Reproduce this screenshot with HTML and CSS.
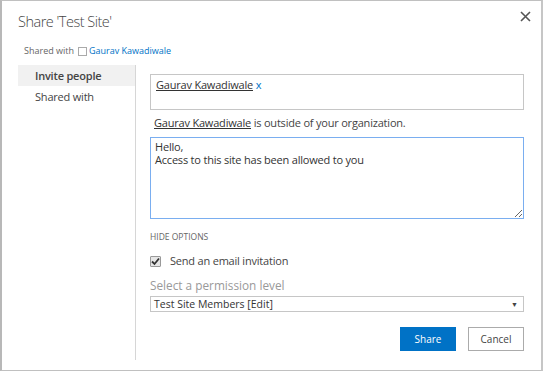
FILE: index.html
```html
<!DOCTYPE html>
<html lang="en">
<head>
    <meta charset="UTF-8">
    <title>Share 'Test Site'</title>
    <link rel="stylesheet" href="styles.css">
</head>
<body>
    <div class="dialog">
        <div class="dialog-header">
            <div class="dialog-title">Share 'Test Site'</div>
            <div class="close-button">
                <svg width="11" height="11" viewBox="0 0 11 11"><path d="M1 1 L10 10 M10 1 L1 10" stroke="#555" stroke-width="1.6"/></svg>
            </div>
        </div>
        <div class="shared-line">
            Shared with <span class="user-box"></span><a class="link">Gaurav Kawadiwale</a>
        </div>
        <div class="dialog-body">
            <div class="side-nav">
                <div class="nav-item selected">Invite people</div>
                <div class="nav-item">Shared with</div>
            </div>
            <div class="content">
                <div class="people-picker">
                    <span class="person">Gaurav Kawadiwale</span> <span class="remove">x</span>
                </div>
                <div class="warning"><span class="person">Gaurav Kawadiwale</span> is outside of your organization.</div>
                <textarea class="message">Hello,
Access to this site has been allowed to you</textarea>
                <div class="options-toggle">HIDE OPTIONS</div>
                <label class="check-row">
                    <span class="check-box">
                        <svg width="9" height="9" viewBox="0 0 9 9"><path d="M1 4.5 L3.5 7 L8 1.5" stroke="#333" stroke-width="1.8" fill="none"/></svg>
                    </span>
                    Send an email invitation
                </label>
                <div class="permission-label">Select a permission level</div>
                <div class="select-box">
                    <span>Test Site Members [Edit]</span>
                    <span class="arrow">&#9660;</span>
                </div>
                <div class="buttons">
                    <button class="btn primary">Share</button>
                    <button class="btn">Cancel</button>
                </div>
            </div>
        </div>
    </div>
</body>
</html>
```

FILE: styles.css
```css
body {
    margin: 0;
    background: #fff;
    font-family: 'Open Sans', Arial, sans-serif;
    color: #444;
}
.dialog {
    width: 543px;
    height: 371px;
    box-sizing: border-box;
    border: 1px solid #c0c0c0;
    border-left: 2px solid #b8b8b8;
    border-right: 2px solid #c6c6c6;
    background: #fff;
    display: flex;
    flex-direction: column;
}
.dialog-header {
    display: flex;
    justify-content: space-between;
    align-items: flex-start;
    padding: 7px 10px 0 16px;
}
.dialog-title {
    font-size: 14.5px;
    font-weight: 300;
    letter-spacing: -0.5px;
    color: #444;
    line-height: 28px;
}
.close-button {
    margin-top: 3px;
    cursor: pointer;
}
.close-button svg {
    display: block;
}
.shared-line {
    font-size: 9px;
    color: #666;
    padding: 8px 0 0 22px;
    line-height: 14px;
    display: flex;
    align-items: center;
}
.user-box {
    display: inline-block;
    width: 7px;
    height: 7px;
    border: 1px solid #aaa;
    margin: 0 2px 0 4px;
}
.link {
    color: #0072c6;
}
.dialog-body {
    display: flex;
    flex: 1;
    padding: 7px 0 10px 16px;
}
.side-nav {
    width: 117px;
    border-right: 1px solid #d6d6d6;
}
.nav-item {
    font-size: 11px;
    letter-spacing: -0.2px;
    padding: 0 0 0 17px;
    line-height: 21px;
}
.nav-item.selected {
    background: #f1f1f1;
    font-weight: 600;
}
.content {
    flex: 1;
    padding: 9px 17px 0 14px;
    display: flex;
    flex-direction: column;
}
.people-picker {
    height: 36px;
    box-sizing: border-box;
    border: 1px solid #c6c6c6;
    padding: 2px 5px;
    font-size: 11px;
    letter-spacing: -0.2px;
    line-height: 16px;
}
.person {
    text-decoration: underline;
    color: #333;
}
.remove {
    color: #0072c6;
}
.warning {
    font-size: 11px;
    letter-spacing: -0.2px;
    padding: 0 4px;
    line-height: 16px;
    margin: 5px 0 6px;
}
.message {
    height: 82px;
    box-sizing: border-box;
    border: 1px solid #7aaef0;
    outline: none;
    padding: 2px 4px;
    font-family: 'Open Sans', Arial, sans-serif;
    font-size: 11px;
    letter-spacing: -0.2px;
    line-height: 13px;
    color: #333;
    resize: both;
    margin: 0;
}
.options-toggle {
    font-size: 8.5px;
    color: #666;
    margin-top: 12px;
    line-height: 12px;
}
.check-row {
    display: flex;
    align-items: center;
    font-size: 11px;
    letter-spacing: -0.2px;
    margin-top: 11px;
    line-height: 14px;
}
.check-box {
    width: 9px;
    height: 9px;
    border: 1px solid #999;
    background: #e6e6e6;
    border-radius: 1px;
    margin-right: 9px;
    display: flex;
    align-items: center;
    justify-content: center;
}
.permission-label {
    font-size: 11.8px;
    color: #999;
    margin-top: 8px;
    line-height: 18px;
}
.select-box {
    height: 16px;
    box-sizing: border-box;
    border: 1px solid #c6c6c6;
    margin-top: 2px;
    display: flex;
    justify-content: space-between;
    align-items: center;
    padding: 0 5px 0 3px;
    font-size: 10.5px;
    color: #333;
}
.arrow {
    font-size: 7px;
    color: #444;
}
.buttons {
    display: flex;
    justify-content: flex-end;
    gap: 12px;
    margin-top: 15px;
}
.btn {
    width: 56px;
    height: 24px;
    border: 1px solid #ababab;
    background: #fff;
    font-family: 'Open Sans', Arial, sans-serif;
    font-size: 10px;
    color: #444;
    cursor: pointer;
}
.btn.primary {
    background: #0072c6;
    border-color: #0072c6;
    color: #fff;
}
```
